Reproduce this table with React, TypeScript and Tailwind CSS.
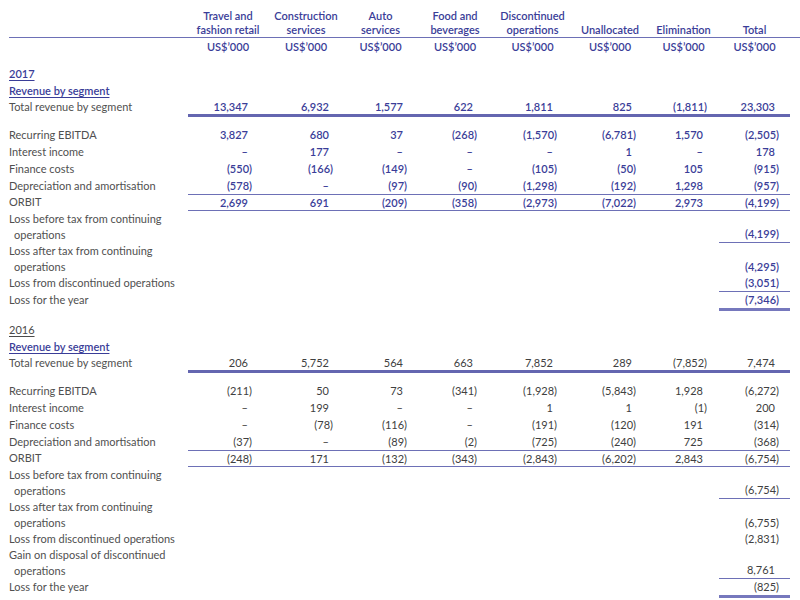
const GRID = "grid grid-cols-[179px_80px_76px_73px_76px_79px_76px_71px_71px]";

const PADS = [
  "pr-[16px]",
  "pr-[11px]",
  "pr-[10px]",
  "pr-[16px]",
  "pr-[15px]",
  "pr-[12px]",
  "pr-[12px]",
  "pr-[11px]",
];

const HEADERS: string[][] = [
  ["Travel and", "fashion retail"],
  ["Construction", "services"],
  ["Auto", "services"],
  ["Food and", "beverages"],
  ["Discontinued", "operations"],
  ["Unallocated"],
  ["Elimination"],
  ["Total"],
];

type Row = {
  label: string[];
  values: string[];
  kind?: "revenue" | "orbit" | "single" | "final";
  ruleBelow?: boolean;
  gapBefore?: boolean;
};

const data2017: Row[] = [
  {
    label: ["Total revenue by segment"],
    values: ["13,347", "6,932", "1,577", "622", "1,811", "825", "(1,811)", "23,303"],
    kind: "revenue",
  },
  {
    label: ["Recurring EBITDA"],
    values: ["3,827", "680", "37", "(268)", "(1,570)", "(6,781)", "1,570", "(2,505)"],
    gapBefore: true,
  },
  { label: ["Interest income"], values: ["–", "177", "–", "–", "–", "1", "–", "178"] },
  { label: ["Finance costs"], values: ["(550)", "(166)", "(149)", "–", "(105)", "(50)", "105", "(915)"] },
  {
    label: ["Depreciation and amortisation"],
    values: ["(578)", "–", "(97)", "(90)", "(1,298)", "(192)", "1,298", "(957)"],
  },
  {
    label: ["ORBIT"],
    values: ["2,699", "691", "(209)", "(358)", "(2,973)", "(7,022)", "2,973", "(4,199)"],
    kind: "orbit",
  },
  { label: ["Loss before tax from continuing", "operations"], values: ["(4,199)"], kind: "single", ruleBelow: true },
  { label: ["Loss after tax from continuing", "operations"], values: ["(4,295)"], kind: "single" },
  { label: ["Loss from discontinued operations"], values: ["(3,051)"], kind: "single", ruleBelow: true },
  { label: ["Loss for the year"], values: ["(7,346)"], kind: "final" },
];

const data2016: Row[] = [
  {
    label: ["Total revenue by segment"],
    values: ["206", "5,752", "564", "663", "7,852", "289", "(7,852)", "7,474"],
    kind: "revenue",
  },
  {
    label: ["Recurring EBITDA"],
    values: ["(211)", "50", "73", "(341)", "(1,928)", "(5,843)", "1,928", "(6,272)"],
    gapBefore: true,
  },
  { label: ["Interest income"], values: ["–", "199", "–", "–", "1", "1", "(1)", "200"] },
  { label: ["Finance costs"], values: ["–", "(78)", "(116)", "–", "(191)", "(120)", "191", "(314)"] },
  {
    label: ["Depreciation and amortisation"],
    values: ["(37)", "–", "(89)", "(2)", "(725)", "(240)", "725", "(368)"],
  },
  {
    label: ["ORBIT"],
    values: ["(248)", "171", "(132)", "(343)", "(2,843)", "(6,202)", "2,843", "(6,754)"],
    kind: "orbit",
  },
  { label: ["Loss before tax from continuing", "operations"], values: ["(6,754)"], kind: "single", ruleBelow: true },
  { label: ["Loss after tax from continuing", "operations"], values: ["(6,755)"], kind: "single" },
  { label: ["Loss from discontinued operations"], values: ["(2,831)"], kind: "single" },
  { label: ["Gain on disposal of discontinued", "operations"], values: ["8,761"], kind: "single", ruleBelow: true },
  { label: ["Loss for the year"], values: ["(825)"], kind: "final" },
];

const Num = ({ v }: { v: string }) => (
  <span className={v.endsWith(")") ? "" : "pr-[4px]"}>{v}</span>
);

const Label = ({ lines }: { lines: string[] }) => (
  <div className="text-[#505050]">
    {lines.map((l, i) => (
      <div key={i} className={i > 0 ? "pl-[5px]" : ""}>
        {l}
      </div>
    ))}
  </div>
);

const TableRow = ({ row, numColor }: { row: Row; numColor: string }) => {
  const { kind, values } = row;

  if (kind === "single" || kind === "final") {
    return (
      <div className={`${GRID} leading-[16px]`}>
        <Label lines={row.label} />
        <div className="col-span-7" />
        <div
          className={`flex flex-col justify-end text-right ${PADS[7]} ${numColor} ${
            kind === "final" ? "border-b-[3px] border-[#7678bd]" : row.ruleBelow ? "border-b border-[#6d70b6]" : ""
          }`}
        >
          <Num v={values[0]} />
        </div>
      </div>
    );
  }

  const leading =
    kind === "revenue" ? "leading-[15px]" : kind === "orbit" ? "leading-[15px]" : "leading-[17px]";
  const cellBorder =
    kind === "revenue"
      ? "border-b-[3px] border-[#6466b0]"
      : kind === "orbit"
      ? "border-y border-[#6d70b6]"
      : "";

  return (
    <div className={`${GRID} ${leading} ${row.gapBefore ? "mt-[9px]" : ""}`}>
      <Label lines={row.label} />
      {values.map((v, i) => (
        <div key={i} className={`text-right ${PADS[i]} ${numColor} ${cellBorder}`}>
          <Num v={v} />
        </div>
      ))}
    </div>
  );
};

const Section = ({
  year,
  rows,
  yearColor,
  numColor,
}: {
  year: string;
  rows: Row[];
  yearColor: string;
  numColor: string;
}) => (
  <section className="mt-[10px]">
    <div className={`leading-[17px] ${yearColor}`}>
      <span className="underline underline-offset-[2px]">{year}</span>
    </div>
    <div className="leading-[17px] text-[#3a3d98] font-semibold">
      <span className="underline underline-offset-[2px]">Revenue by segment</span>
    </div>
    {rows.map((r, i) => (
      <TableRow key={i} row={r} numColor={numColor} />
    ))}
  </section>
);

export default function App() {
  return (
    <div
      className="w-[800px] h-[600px] bg-white pl-[9px] text-[11px] overflow-hidden"
      style={{ fontFamily: "Lato, 'Open Sans', sans-serif" }}
    >
      {/* column headings */}
      <div className={`${GRID} pt-[9px] leading-[14px] border-b border-[#6d70b6] text-[#3a3d98] font-semibold`}>
        <div />
        {HEADERS.map((h, i) => (
          <div key={i} className="flex flex-col justify-end text-center">
            {h.map((l) => (
              <div key={l}>{l}</div>
            ))}
          </div>
        ))}
      </div>
      <div className={`${GRID} leading-[17px] text-[#3a3d98] font-semibold`}>
        <div />
        {HEADERS.map((_, i) => (
          <div key={i} className="text-center">
            US$’000
          </div>
        ))}
      </div>

      <Section year="2017" rows={data2017} yearColor="text-[#3a3d98] font-semibold" numColor="text-[#3a3d98] font-semibold" />
      <Section year="2016" rows={data2016} yearColor="text-[#4a4a4a]" numColor="text-[#404040]" />
    </div>
  );
}
